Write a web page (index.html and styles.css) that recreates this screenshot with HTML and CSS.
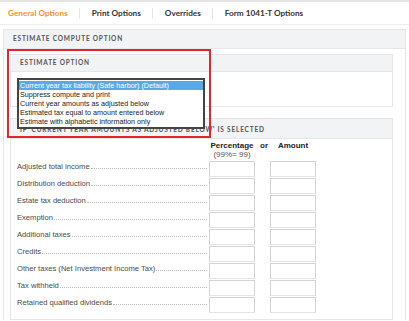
FILE: index.html
```html
<!DOCTYPE html>
<html lang="en">
<head>
    <meta charset="UTF-8">
    <meta name="viewport" content="width=device-width, initial-scale=1.0">
    <title>General Options</title>
    <link rel="stylesheet" href="styles.css">
</head>
<body>

<div class="tabs">
    <a href="#" class="tab active">General Options</a>
    <a href="#" class="tab">Print Options</a>
    <a href="#" class="tab">Overrides</a>
    <a href="#" class="tab">Form 1041-T Options</a>
</div>

<div class="panel">
    <div class="panel-head">Estimate Compute Option</div>
    <div class="panel-body">

        <div class="section">
            <div class="section-head">Estimate Option</div>
            <div class="section-body option-body"></div>
        </div>

        <div class="section adjusted">
            <div class="section-head tall">If 'Current year amounts as adjusted below' is selected</div>
            <div class="section-body">
                <div class="col-heads">
                    <div class="col-head">Percentage<br><span class="hint">(99%= 99)</span></div>
                    <div class="col-or">or</div>
                    <div class="col-head">Amount</div>
                </div>

                <div class="row"><span class="label">Adjusted total income<i class="dots"></i></span><input type="text"><input type="text"></div>
                <div class="row"><span class="label">Distribution deduction<i class="dots"></i></span><input type="text"><input type="text"></div>
                <div class="row"><span class="label">Estate tax deduction<i class="dots"></i></span><input type="text"><input type="text"></div>
                <div class="row"><span class="label">Exemption<i class="dots"></i></span><input type="text"><input type="text"></div>
                <div class="row"><span class="label">Additional taxes<i class="dots"></i></span><input type="text"><input type="text"></div>
                <div class="row"><span class="label">Credits<i class="dots"></i></span><input type="text"><input type="text"></div>
                <div class="row"><span class="label">Other taxes (Net Investment Income Tax)<i class="dots"></i></span><input type="text"><input type="text"></div>
                <div class="row"><span class="label">Tax withheld<i class="dots"></i></span><input type="text"><input type="text"></div>
                <div class="row"><span class="label">Retained qualified dividends<i class="dots"></i></span><input type="text"><input type="text"></div>
            </div>
        </div>

        <!-- open dropdown list and the review highlight sit over the sections -->
        <ul class="listbox">
            <li class="selected">Current year tax liability (Safe harbor) (Default)</li>
            <li>Suppress compute and print</li>
            <li>Current year amounts as adjusted below</li>
            <li>Estimated tax equal to amount entered below</li>
            <li>Estimate with alphabetic information only</li>
        </ul>
        <div class="highlight"></div>
    </div>
</div>

</body>
</html>
```

FILE: styles.css
```css
body {
    margin: 0;
    font-family: Lato, "Open Sans", sans-serif;
    background: #fff;
    border-top: 2px solid #e4e4e4;
    overflow: hidden;
}
.tabs {
    display: flex;
    align-items: center;
    height: 22px;
    padding-left: 8px;
    border-bottom: 1px solid #ececec;
}
.tab {
    font-size: 8.2px;
    font-weight: bold;
    color: #333;
    text-decoration: none;
    padding: 0 11px 0 12px;
    border-left: 1px solid #e4e4e4;
    line-height: 11px;
}
.tab:first-child {
    padding-left: 0;
    border-left: none;
}
.tab.active {
    color: #f7941d;
}
.panel {
    margin: 4px 3px 0 3px;
    border: 1px solid #e6e6e6;
    border-bottom: none;
}
.panel-head, .section-head {
    background: #f2f3f5;
    border-bottom: 1px solid #e6e6e6;
    font-size: 6.5px;
    font-weight: bold;
    letter-spacing: 0.8px;
    text-transform: uppercase;
    color: #555;
}
.panel-head {
    height: 18px;
    line-height: 18px;
    padding-left: 9px;
}
.panel-body {
    position: relative;
    padding: 5px 12px 0 6px;
}
.section {
    border: 1px solid #e6e6e6;
}
.section-head {
    height: 16px;
    line-height: 16px;
    padding-left: 9px;
}
.section-head.tall {
    height: 19px;
    line-height: 21px;
}
.option-body {
    height: 34px;
}
.adjusted {
    margin-top: 11px;
}
.adjusted .section-body {
    padding: 2px 0 5px 6px;
    font-family: "Liberation Sans", Arial, sans-serif;
    font-size: 7.6px;
    color: #4a4a4a;
}
.col-heads {
    display: flex;
    margin-left: 192px;
    height: 20px;
    font-size: 8px;
    font-weight: bold;
    color: #222;
}
.col-head {
    width: 46px;
    text-align: center;
    line-height: 9px;
    white-space: nowrap;
}
.col-or {
    width: 15px;
    padding-left: 3px;
    box-sizing: border-box;
    text-align: center;
    line-height: 9px;
}
.hint {
    font-weight: normal;
    color: #555;
}
.row {
    display: flex;
    align-items: flex-start;
    height: 17px;
}
.label {
    display: flex;
    align-items: baseline;
    width: 192px;
    padding-top: 1px;
    line-height: 9px;
    white-space: nowrap;
}
.dots {
    flex: 1;
    margin: 0 2px 0 1px;
    border-bottom: 1px dotted #bbb;
}
.row input {
    box-sizing: border-box;
    width: 46px;
    height: 16px;
    margin: 0;
    border: 1px solid #d4d4d4;
    border-bottom-color: #e4e4e4;
}
.row input + input {
    margin-left: 15px;
}
.listbox {
    position: absolute;
    left: 13px;
    top: 29px;
    width: 184px;
    margin: 0;
    padding: 1px 0;
    list-style: none;
    background: #fff;
    border: 2px solid #444;
    font-family: "Liberation Sans", Arial, sans-serif;
    font-size: 7.2px;
    line-height: 9px;
    color: #222;
}
.listbox li {
    padding-left: 1px;
}
.listbox .selected {
    background: #5aa8e6;
    color: #fff;
}
.highlight {
    position: absolute;
    left: 3px;
    top: 0;
    width: 200px;
    height: 85px;
    border: 2px solid #e3262b;
}
```
